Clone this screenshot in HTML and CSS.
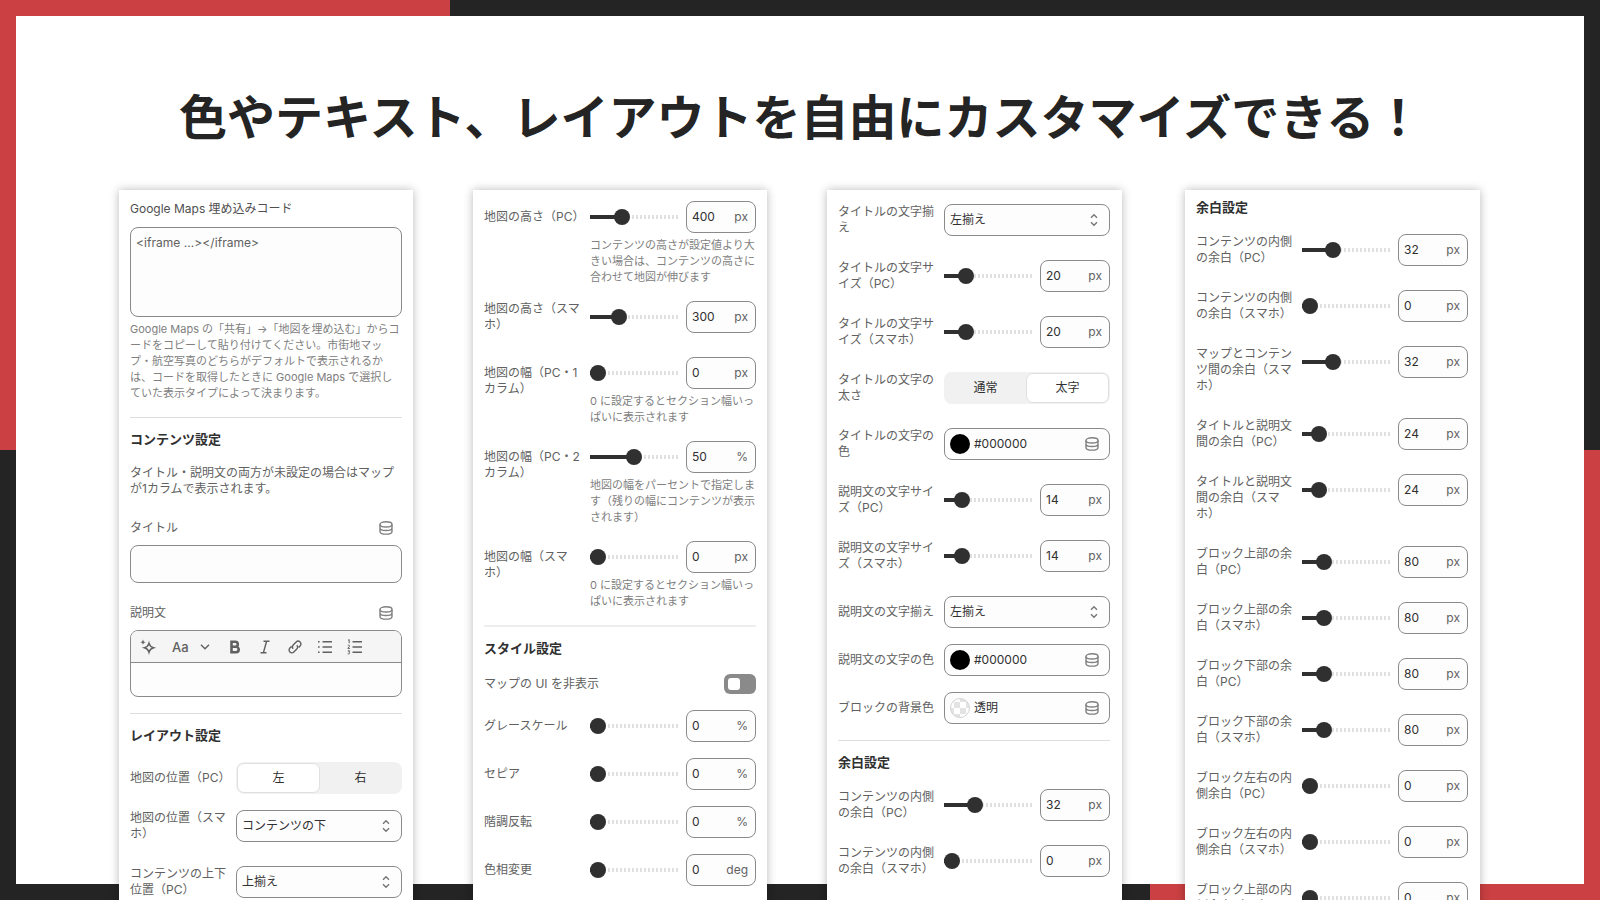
FILE: index.html
```html
<!DOCTYPE html>
<html lang="ja">
<head>
  <meta charset="UTF-8">
  <title>色やテキスト、レイアウトを自由にカスタマイズできる！</title>
  <link rel="stylesheet" href="styles.css">
</head>
<body>
  <svg class="sprite" width="0" height="0">
    <symbol id="icon-db" viewBox="0 0 14 14">
      <ellipse cx="7" cy="3.4" rx="6" ry="2.6"/>
      <path d="M1 3.400v7c0 1.500 2.600 2.700 6 2.700s6-1.200 6-2.700v-7M1 6.900c0 1.500 2.600 2.600 6 2.600s6-1.100 6-2.600"/>
    </symbol>
    <symbol id="icon-updown" viewBox="0 0 10 14">
      <path d="M2 4.8l3-3 3 3M2 9.2l3 3 3-3"/>
    </symbol>
  </svg>

  <div class="slide">
    <h1>色やテキスト、レイアウトを自由にカスタマイズできる！</h1>

    <div class="panels">
      <!-- 埋め込みコード・コンテンツ・レイアウト -->
      <section class="panel panel-content">
        <div class="field-label">Google Maps 埋め込みコード</div>
        <div class="textarea">&lt;iframe ...&gt;&lt;/iframe&gt;</div>
        <p class="help">Google Maps の「共有」→「地図を埋め込む」からコ<br>ードをコピーして貼り付けてください。市街地マッ<br>プ・航空写真のどちらがデフォルトで表示されるか<br>は、コードを取得したときに Google Maps で選択し<br>ていた表示タイプによって決まります。</p>
        <hr>
        <h2>コンテンツ設定</h2>
        <p class="note">タイトル・説明文の両方が未設定の場合はマップ<br>が1カラムで表示されます。</p>
        <div class="field-head first"><span>タイトル</span><svg class="db"><use href="#icon-db"/></svg></div>
        <div class="input"></div>
        <div class="field-head"><span>説明文</span><svg class="db"><use href="#icon-db"/></svg></div>
        <div class="editor">
          <div class="toolbar">
            <span class="tool"><svg width="16" height="16" viewBox="0 0 16 16"><path d="M9 4.300c.7 2.700 1.800 3.800 4.500 4.500-2.700.7-3.800 1.800-4.500 4.500-.7-2.700-1.800-3.800-4.500-4.500 2.700-.7 3.800-1.800 4.500-4.500z"/><path class="solid" d="M3 .6l.8 1.800 1.800.8-1.800.8L3 5.800l-.8-1.800-1.800-.8 1.800-.8z"/></svg></span>
            <span class="tool type">Aa<svg width="10" height="6" viewBox="0 0 10 6"><path d="M1 .8l4 4 4-4"/></svg></span>
            <span class="tool"><svg class="bold" width="12" height="14" viewBox="0 0 12 14"><path d="M2.500 1.800h3.800a2.500 2.500 0 0 1 0 5H2.500zM2.500 6.800h4.500a2.700 2.700 0 0 1 0 5.400H2.500z"/></svg></span>
            <span class="tool"><svg width="12" height="14" viewBox="0 0 12 14"><path d="M4.500 1.200h6M1.500 12.800h6M7.600 1.200L4.400 12.800"/></svg></span>
            <span class="tool"><svg width="16" height="16" viewBox="0 0 16 16"><path d="M6.200 9.800c-1.100-1.100-1.100-2.700 0-3.800l3-3c1.100-1.100 2.800-1.100 3.900 0s1.100 2.800 0 3.900l-1.500 1.500M9.800 6.200c1.100 1.100 1.100 2.700 0 3.800l-3 3c-1.100 1.100-2.800 1.100-3.900 0s-1.100-2.800 0-3.900l1.500-1.500"/></svg></span>
            <span class="tool"><svg width="16" height="16" viewBox="0 0 16 16"><path d="M5.500 2.700H15M5.500 8H15M5.500 13.300H15M1 2.700h1.600M1 8h1.600M1 13.300h1.600"/></svg></span>
            <span class="tool"><svg width="16" height="16" viewBox="0 0 16 16"><path d="M5.500 2.700H15M5.500 8H15M5.500 13.300H15"/><path class="thin" d="M1 1.300l1.200-.7v3.600M.8 6.500c1-.9 2.400 0 1.500 1.100L.8 9.400h2.100M.8 11.800h1.900l-1 1.300c1.700 0 1.300 2.300-1 1.800"/></svg></span>
          </div>
        </div>
        <hr>
        <h2>レイアウト設定</h2>
        <div class="rows">
          <div class="row"><label>地図の位置（PC）</label><div class="segment"><span class="on">左</span><span>右</span></div></div>
          <div class="row tall"><label>地図の位置（スマ<br>ホ）</label><div class="select">コンテンツの下<svg><use href="#icon-updown"/></svg></div></div>
          <div class="row tall"><label>コンテンツの上下<br>位置（PC）</label><div class="select">上揃え<svg><use href="#icon-updown"/></svg></div></div>
        </div>
      </section>

      <!-- 地図サイズ・スタイル -->
      <section class="panel panel-style">
        <div class="rows">
          <div class="row"><label>地図の高さ（PC）</label>
            <div>
              <div class="range"><div class="slider" style="--pos: 24px"></div><div class="num">400<i>px</i></div></div>
              <p class="help">コンテンツの高さが設定値より大<br>きい場合は、コンテンツの高さに<br>合わせて地図が伸びます</p>
            </div>
          </div>
          <div class="row tall"><label>地図の高さ（スマ<br>ホ）</label><div class="range"><div class="slider" style="--pos: 21px"></div><div class="num">300<i>px</i></div></div></div>
          <div class="row"><label>地図の幅（PC・1<br>カラム）</label>
            <div>
              <div class="range"><div class="slider" style="--pos: 0px"></div><div class="num">0<i>px</i></div></div>
              <p class="help">0 に設定するとセクション幅いっ<br>ぱいに表示されます</p>
            </div>
          </div>
          <div class="row"><label>地図の幅（PC・2<br>カラム）</label>
            <div>
              <div class="range"><div class="slider" style="--pos: 36px"></div><div class="num">50<i>%</i></div></div>
              <p class="help">地図の幅をパーセントで指定しま<br>す（残りの幅にコンテンツが表示<br>されます）</p>
            </div>
          </div>
          <div class="row"><label>地図の幅（スマ<br>ホ）</label>
            <div>
              <div class="range"><div class="slider" style="--pos: 0px"></div><div class="num">0<i>px</i></div></div>
              <p class="help">0 に設定するとセクション幅いっ<br>ぱいに表示されます</p>
            </div>
          </div>
        </div>
        <hr>
        <h2>スタイル設定</h2>
        <div class="toggle-row"><span>マップの UI を非表示</span><span class="toggle"></span></div>
        <div class="rows">
          <div class="row"><label>グレースケール</label><div class="range"><div class="slider" style="--pos: 0px"></div><div class="num">0<i>%</i></div></div></div>
          <div class="row"><label>セピア</label><div class="range"><div class="slider" style="--pos: 0px"></div><div class="num">0<i>%</i></div></div></div>
          <div class="row"><label>階調反転</label><div class="range"><div class="slider" style="--pos: 0px"></div><div class="num">0<i>%</i></div></div></div>
          <div class="row"><label>色相変更</label><div class="range"><div class="slider" style="--pos: 0px"></div><div class="num">0<i>deg</i></div></div></div>
        </div>
      </section>

      <!-- 文字・色 -->
      <section class="panel panel-text">
        <div class="rows">
          <div class="row tall"><label>タイトルの文字揃<br>え</label><div class="select">左揃え<svg><use href="#icon-updown"/></svg></div></div>
          <div class="row tall"><label>タイトルの文字サ<br>イズ（PC）</label><div class="range"><div class="slider" style="--pos: 14px"></div><div class="num">20<i>px</i></div></div></div>
          <div class="row tall"><label>タイトルの文字サ<br>イズ（スマホ）</label><div class="range"><div class="slider" style="--pos: 14px"></div><div class="num">20<i>px</i></div></div></div>
          <div class="row tall"><label>タイトルの文字の<br>太さ</label><div class="segment"><span>通常</span><span class="on">太字</span></div></div>
          <div class="row tall"><label>タイトルの文字の<br>色</label><div class="color"><b class="swatch"></b>#000000<svg class="db"><use href="#icon-db"/></svg></div></div>
          <div class="row tall"><label>説明文の文字サイ<br>ズ（PC）</label><div class="range"><div class="slider" style="--pos: 10px"></div><div class="num">14<i>px</i></div></div></div>
          <div class="row tall"><label>説明文の文字サイ<br>ズ（スマホ）</label><div class="range"><div class="slider" style="--pos: 10px"></div><div class="num">14<i>px</i></div></div></div>
          <div class="row"><label>説明文の文字揃え</label><div class="select">左揃え<svg><use href="#icon-updown"/></svg></div></div>
          <div class="row"><label>説明文の文字の色</label><div class="color"><b class="swatch"></b>#000000<svg class="db"><use href="#icon-db"/></svg></div></div>
          <div class="row"><label>ブロックの背景色</label><div class="color"><b class="swatch clear"></b>透明<svg class="db"><use href="#icon-db"/></svg></div></div>
        </div>
        <hr>
        <h2>余白設定</h2>
        <div class="rows">
          <div class="row tall"><label>コンテンツの内側<br>の余白（PC）</label><div class="range"><div class="slider" style="--pos: 23px"></div><div class="num">32<i>px</i></div></div></div>
          <div class="row tall"><label>コンテンツの内側<br>の余白（スマホ）</label><div class="range"><div class="slider" style="--pos: 0px"></div><div class="num">0<i>px</i></div></div></div>
        </div>
      </section>

      <!-- 余白 -->
      <section class="panel panel-space">
        <h2>余白設定</h2>
        <div class="rows">
          <div class="row tall"><label>コンテンツの内側<br>の余白（PC）</label><div class="range"><div class="slider" style="--pos: 23px"></div><div class="num">32<i>px</i></div></div></div>
          <div class="row tall"><label>コンテンツの内側<br>の余白（スマホ）</label><div class="range"><div class="slider" style="--pos: 0px"></div><div class="num">0<i>px</i></div></div></div>
          <div class="row tall"><label>マップとコンテン<br>ツ間の余白（スマ<br>ホ）</label><div class="range"><div class="slider" style="--pos: 23px"></div><div class="num">32<i>px</i></div></div></div>
          <div class="row tall"><label>タイトルと説明文<br>間の余白（PC）</label><div class="range"><div class="slider" style="--pos: 9px"></div><div class="num">24<i>px</i></div></div></div>
          <div class="row tall"><label>タイトルと説明文<br>間の余白（スマ<br>ホ）</label><div class="range"><div class="slider" style="--pos: 9px"></div><div class="num">24<i>px</i></div></div></div>
          <div class="row tall"><label>ブロック上部の余<br>白（PC）</label><div class="range"><div class="slider" style="--pos: 14px"></div><div class="num">80<i>px</i></div></div></div>
          <div class="row tall"><label>ブロック上部の余<br>白（スマホ）</label><div class="range"><div class="slider" style="--pos: 14px"></div><div class="num">80<i>px</i></div></div></div>
          <div class="row tall"><label>ブロック下部の余<br>白（PC）</label><div class="range"><div class="slider" style="--pos: 14px"></div><div class="num">80<i>px</i></div></div></div>
          <div class="row tall"><label>ブロック下部の余<br>白（スマホ）</label><div class="range"><div class="slider" style="--pos: 14px"></div><div class="num">80<i>px</i></div></div></div>
          <div class="row tall"><label>ブロック左右の内<br>側余白（PC）</label><div class="range"><div class="slider" style="--pos: 0px"></div><div class="num">0<i>px</i></div></div></div>
          <div class="row tall"><label>ブロック左右の内<br>側余白（スマホ）</label><div class="range"><div class="slider" style="--pos: 0px"></div><div class="num">0<i>px</i></div></div></div>
          <div class="row tall"><label>ブロック上部の内<br>側余白（PC）</label><div class="range"><div class="slider" style="--pos: 0px"></div><div class="num">0<i>px</i></div></div></div>
        </div>
      </section>
    </div>
  </div>
</body>
</html>
```
FILE: styles.css
```css
* {
  box-sizing: border-box;
}

body {
  margin: 0;
  width: 1600px;
  height: 900px;
  overflow: hidden;
  padding: 16px;
  font-family: Inter, "Noto Sans CJK JP", sans-serif;
  font-size: 12px;
  line-height: 16px;
  color: #616161;
  /* red corners on a dark frame */
  background:
    linear-gradient(#cb4042, #cb4042) 0 0 / 450px 450px no-repeat,
    linear-gradient(#cb4042, #cb4042) 1150px 450px / 450px 450px no-repeat,
    #242424;
}

.sprite {
  display: block;
  position: absolute;
}

.slide {
  height: 868px;
  background: #fff;
}

h1 {
  margin: 0;
  height: 174px;
  padding: 62px 0 0 163px;
  font-family: "Noto Sans CJK JP", sans-serif;
  font-size: 48px;
  line-height: 72px;
  font-weight: 700;
  color: #242424;
  white-space: nowrap;
}

.panels {
  display: flex;
  gap: 60px;
  padding-left: 103px;
}

.panel {
  flex: none;
  width: 294px;
  height: 730px;
  padding: 0 11px;
  background: #fff;
  box-shadow: 0 0 9px rgba(0, 0, 0, 0.28);
  white-space: nowrap;
}
.panel-content { padding-top: 11px; }
.panel-style { padding-top: 11px; }
.panel-text { width: 295px; padding-top: 14px; padding-right: 12px; }
.panel-space { width: 295px; padding-top: 7px; padding-right: 12px; margin-left: 3px; }

svg {
  fill: none;
  stroke: #616161;
  stroke-width: 1.4;
}

h2 {
  margin: 11px 0 0;
  font-size: 13px;
  line-height: 20px;
  font-weight: 700;
  color: #303030;
}
.panel-space h2 { margin-top: 0; }

hr {
  height: 1px;
  margin: 16px 0 0;
  border: 0;
  background: #dedede;
}
.panel-style hr { height: 2px; background: #ededed; }

p { margin: 0; }

.help {
  margin-top: 4px;
  font-size: 11px;
  color: #808080;
}

.note { margin-top: 16px; }

.textarea,
.input,
.editor,
.select,
.color,
.num {
  border: 1px solid #8a8a8a;
  border-radius: 8px;
  background: #fdfdfd;
}

.field-label { color: #4f4f4f; }

.textarea {
  height: 90px;
  margin-top: 10px;
  padding: 7px 5px;
  letter-spacing: 0.05px;
}

.field-head {
  display: flex;
  justify-content: space-between;
  align-items: center;
  height: 20px;
  margin-top: 20px;
  padding-right: 9px;
}
.field-head.first { margin-top: 21px; }

.db {
  width: 14px;
  height: 14px;
  stroke: #808080;
}

.input {
  height: 38px;
  margin-top: 7px;
}

.editor {
  height: 67px;
  margin-top: 7px;
  overflow: hidden;
}

.toolbar {
  display: flex;
  height: 32px;
  padding-left: 2px;
  border-bottom: 1px solid #8a8a8a;
  background: #f5f5f5;
}
.tool {
  width: 30px;
  display: flex;
  justify-content: center;
  align-items: center;
}
.tool.type {
  width: 57px;
  justify-content: flex-start;
  padding-left: 9px;
  gap: 11px;
  font-size: 13px;
  font-weight: 500;
}
.tool .bold { stroke-width: 2.6; }
.tool .solid { fill: #616161; stroke: none; }
.tool .thin { stroke-width: 1; }

.rows {
  display: flex;
  flex-direction: column;
  gap: 16px;
}
h2 + .rows { margin-top: 17px; }

.row {
  display: grid;
  grid-template-columns: 1fr 166px;
  align-items: start;
}
.row label { padding-top: 8px; }
/* wrapped labels sit level with the control */
.row.tall label { padding: 0 0 8px; }

.range {
  display: flex;
  align-items: center;
  justify-content: space-between;
}

.slider {
  position: relative;
  width: 88px;
  height: 16px;
  background:
    linear-gradient(#303030, #303030) 0 6px / calc(var(--pos) + 4px) 4px no-repeat,
    repeating-linear-gradient(90deg, #e0e0e0 0 2px, #fff 2px 4px) 2px 6px / 86px 4px no-repeat;
}
.slider::before {
  content: "";
  position: absolute;
  left: var(--pos);
  top: 0;
  width: 16px;
  height: 16px;
  border-radius: 50%;
  background: #303030;
}

.num,
.select,
.color {
  display: flex;
  align-items: center;
  height: 32px;
  color: #303030;
}
.num {
  width: 70px;
  justify-content: space-between;
  padding: 0 7px 0 5px;
}
.num i {
  font-style: normal;
  color: #616161;
}

.select {
  justify-content: space-between;
  padding: 0 10px 0 5px;
}
.select svg {
  width: 10px;
  height: 14px;
  stroke: #757575;
  stroke-width: 1.4;
}

.color { padding: 0 10px 0 5px; }
.color .db { margin-left: auto; }
.swatch {
  width: 20px;
  height: 20px;
  margin-right: 4px;
  border-radius: 50%;
  background: #000;
}
.swatch.clear {
  border: 1px solid #d4d4d4;
  background: conic-gradient(#fff 25%, #e3e3e3 0 50%, #fff 0 75%, #e3e3e3 0) 3px 3px / 12px 12px;
}

.segment {
  display: flex;
  height: 32px;
  padding: 1px;
  border-radius: 8px;
  background: #f1f1f1;
  color: #303030;
}
.segment span {
  flex: 1;
  line-height: 29px;
  text-align: center;
}
.segment .on {
  line-height: 27px;
  border: 1px solid #e0e0e0;
  border-radius: 7px;
  background: #fff;
}

.toggle-row {
  display: flex;
  justify-content: space-between;
  align-items: center;
  height: 32px;
  margin: 10px 0;
}
.toggle {
  width: 32px;
  height: 20px;
  padding: 4px;
  border-radius: 6px;
  background: #8a8a8a;
}
.toggle::before {
  content: "";
  display: block;
  width: 12px;
  height: 12px;
  border-radius: 3px;
  background: #fff;
}
```
